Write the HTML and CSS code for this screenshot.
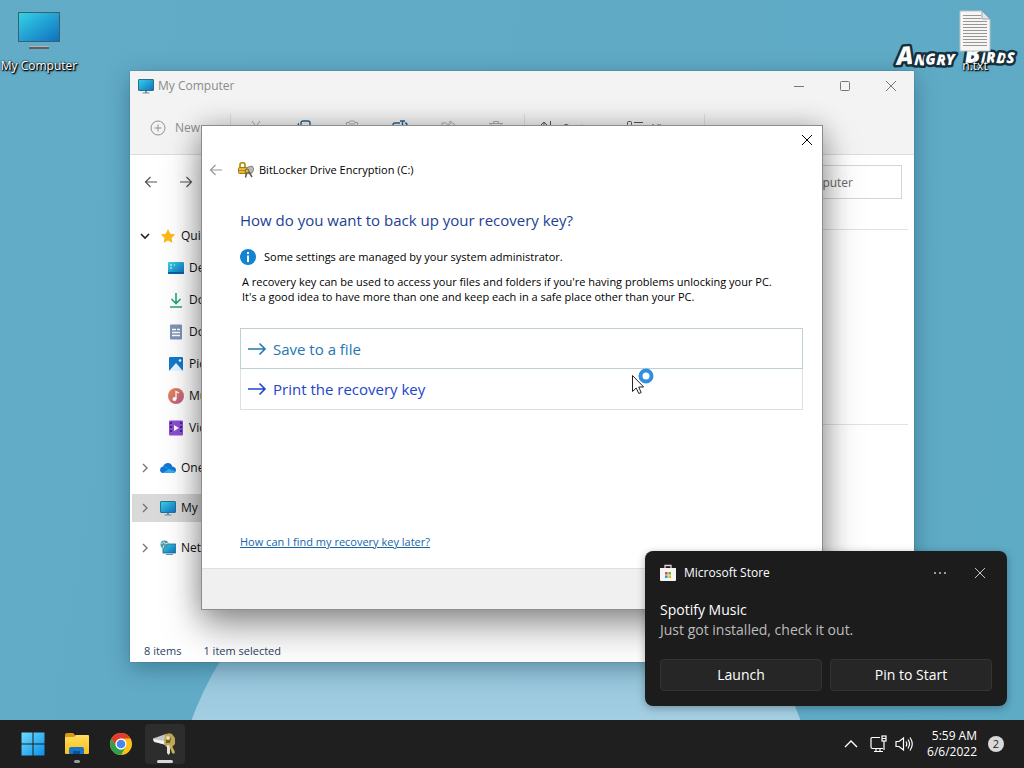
FILE: index.html
```html
<!DOCTYPE html>
<html lang="en">
<head>
    <meta charset="UTF-8">
    <title>Desktop</title>
    <link rel="stylesheet" href="styles.css">
</head>
<body>

<svg class="defs" aria-hidden="true">
    <defs>
        <linearGradient id="screen" x1="0" y1="0" x2="1" y2="1">
            <stop offset="0" stop-color="#35d3e6"/>
            <stop offset="1" stop-color="#0f6fc0"/>
        </linearGradient>
        <linearGradient id="win" x1="0" y1="0" x2="1" y2="1">
            <stop offset="0" stop-color="#6fdcff"/>
            <stop offset="1" stop-color="#0a8fe8"/>
        </linearGradient>
        <linearGradient id="warm" x1="0" y1="0" x2="1" y2="1">
            <stop offset="0" stop-color="#ee8a4c"/>
            <stop offset="1" stop-color="#b75a93"/>
        </linearGradient>
        <linearGradient id="folder" x1="0" y1="0" x2="0" y2="1">
            <stop offset="0" stop-color="#ffdd5c"/>
            <stop offset="1" stop-color="#fbbf1e"/>
        </linearGradient>
    </defs>
    <symbol id="i-pc" viewBox="0 0 16 16">
        <rect x="0.5" y="1.5" width="15" height="11" rx="0.5" fill="url(#screen)" stroke="#2c6f8c"/>
        <path d="M7 13h2v2H7zM4.500 14.500h7v1h-7z" fill="#5a96ae"/>
    </symbol>
    <symbol id="i-x" viewBox="0 0 12 12">
        <path d="M1 1l10 10M11 1L1 11" fill="none" stroke="currentColor"/>
    </symbol>
    <symbol id="i-left" viewBox="0 0 14 14">
        <path d="M13 7H1.500M6.500 2l-5 5 5 5" fill="none" stroke="currentColor" stroke-width="1.200"/>
    </symbol>
    <symbol id="i-right" viewBox="0 0 14 14">
        <path d="M1 7h11.500M7.500 2l5 5-5 5" fill="none" stroke="currentColor" stroke-width="1.200"/>
    </symbol>
    <symbol id="i-go" viewBox="0 0 20 14">
        <path d="M0 7h17M11.500 1.500L17 7l-5.500 5.500" fill="none" stroke="currentColor" stroke-width="1.600"/>
    </symbol>
    <symbol id="i-chev" viewBox="0 0 10 10">
        <path d="M3 1l4 4-4 4" fill="none" stroke="currentColor" stroke-width="1.400"/>
    </symbol>
    <symbol id="i-down" viewBox="0 0 10 10">
        <path d="M1 3l4 4 4-4" fill="none" stroke="currentColor" stroke-width="1.600"/>
    </symbol>
    <symbol id="i-key" viewBox="0 0 16 16">
        <path d="M7 6l7-2 2 3-2 4-6 1z" fill="#b9bcb4" stroke="#6c6c60" stroke-width="0.800"/>
        <path d="M2 6V3a2.500 2.500 0 0 1 5 0v3" fill="none" stroke="#b98f22" stroke-width="1.800"/>
        <rect x="0.500" y="5.500" width="8" height="6" rx="1" fill="#e8b92c" stroke="#a07a18"/>
        <path d="M1 8.500h7" stroke="#a87f18" stroke-width="0.700"/>
        <circle cx="9" cy="9" r="2" fill="#d6b75a" stroke="#6e6030"/>
        <path d="M8.500 11l-1 4.500M11 10l3 5" stroke="#5c5746" stroke-width="1.500"/>
    </symbol>
</svg>

<main class="desktop">
    <div class="petal"></div>

    <a class="shortcut shortcut-pc" href="#">
        <svg viewBox="0 0 42 42" width="42" height="42" aria-hidden="true">
            <rect x="0.500" y="2.500" width="41" height="29" fill="url(#screen)" stroke="#3a5f70"/>
            <rect x="11" y="37" width="20" height="2" fill="#6a5a58"/>
            <rect x="11" y="36" width="20" height="1" fill="#a9b9be"/>
        </svg>
        <span>My Computer</span>
    </a>

    <svg class="logo" viewBox="0 0 132 40" width="132" height="40" role="img" aria-label="Angry Birds">
        <text x="5" y="33" rotate="-4 3 -5 2 -2"><tspan class="cap">A</tspan>NGRY</text>
        <text x="73" y="31" rotate="-3 2 -3 4 2"><tspan class="cap">B</tspan>IRDS</text>
    </svg>

    <a class="shortcut shortcut-txt" href="#">
        <svg viewBox="0 0 32 42" width="32" height="42" aria-hidden="true">
            <path d="M1 1h22l8 8v32H1z" fill="#f6f6f4" stroke="#b9c2c4"/>
            <path d="M4 5.500h18M4 8.500h18M4 11.500h24M4 14.500h24M4 17.500h24M4 20.500h24M4 23.500h24M4 26.500h24M4 29.500h24M4 32.500h24M4 35.500h24" stroke="#9a9492"/>
            <path d="M23 1v8h8z" fill="#dfe5e8" stroke="#98a4a8"/>
        </svg>
        <span>n.txt</span>
    </a>

    <section class="explorer">
        <header class="explorer-title">
            <svg width="16" height="16" aria-hidden="true"><use href="#i-pc"/></svg>
            <span>My Computer</span>
            <div class="caption">
                <button aria-label="Minimize"><svg width="12" height="12" viewBox="0 0 12 12"><path d="M1 6.500h10" stroke="currentColor"/></svg></button>
                <button aria-label="Maximize"><svg width="12" height="12" viewBox="0 0 12 12"><rect x="1.500" y="1.500" width="9" height="9" rx="1" fill="none" stroke="currentColor"/></svg></button>
                <button aria-label="Close"><svg width="12" height="12"><use href="#i-x"/></svg></button>
            </div>
        </header>

        <div class="toolbar">
            <button class="new">
                <svg width="16" height="16" viewBox="0 0 16 16" aria-hidden="true"><circle cx="8" cy="8" r="7" fill="none" stroke="currentColor"/><path d="M8 4.500v7M4.500 8h7" stroke="currentColor"/></svg>
                New
            </button>
            <div class="tools">
                <button aria-label="Cut"><svg width="16" height="16" viewBox="0 0 16 16" fill="none" stroke="currentColor"><path d="M4 1l7 10M12 1L5 11"/><circle cx="4" cy="13" r="2"/><circle cx="12" cy="13" r="2"/></svg></button>
                <button class="on" aria-label="Copy"><svg width="16" height="16" viewBox="0 0 16 16" fill="none" stroke="currentColor" stroke-width="1.400"><rect x="5" y="1" width="9" height="11" rx="2"/><path d="M3 3.500Q2 4 2 6v6q0 3 3 3h5"/></svg></button>
                <button aria-label="Paste"><svg width="16" height="16" viewBox="0 0 16 16" fill="none" stroke="currentColor"><path d="M5 2.500H2.500v12H7M11 2.500h2.500V6"/><rect x="5" y="1" width="6" height="3" rx="1.500"/><rect x="8" y="7" width="6" height="8" rx="1"/></svg></button>
                <button class="on" aria-label="Rename"><svg width="16" height="16" viewBox="0 0 16 16" fill="none" stroke="currentColor" stroke-width="1.400"><path d="M8 3H3Q1 3 1 5v6q0 2 2 2h5M13 3q2 0 2 2v6q0 2-2 2M8 1h5M10.500 1v14M8 15h5"/></svg></button>
                <button aria-label="Share"><svg width="16" height="16" viewBox="0 0 16 16" fill="none" stroke="currentColor"><path d="M7 3H2v11h11v-3M10 1l5 4-5 4V7Q6 7 5 10q0-6 5-6z"/></svg></button>
                <button aria-label="Delete"><svg width="16" height="16" viewBox="0 0 16 16" fill="none" stroke="currentColor"><path d="M1 3.500h14M5.500 3V1.500h5V3M3 4l1 11h8l1-11M6.500 7v5M9.500 7v5"/></svg></button>
            </div>
            <button class="menu">
                <svg width="16" height="16" viewBox="0 0 16 16" fill="none" stroke="currentColor" aria-hidden="true"><path d="M5 15V2M1 6l4-4 4 4M11.500 1v13M8 11l3.500 3.500L15 11"/></svg>
                Sort
            </button>
            <button class="menu">
                <svg width="18" height="16" viewBox="0 0 18 16" fill="none" stroke="currentColor" aria-hidden="true"><rect x="1.500" y="1.500" width="4" height="4" rx="1"/><path d="M8 2.500h9M8 5.500h9M8 10.500h9M8 13.500h9"/><rect x="1.500" y="9.500" width="4" height="4" rx="1"/></svg>
                View
            </button>
        </div>

        <div class="address">
            <button aria-label="Back"><svg width="14" height="14"><use href="#i-left"/></svg></button>
            <button aria-label="Forward"><svg width="14" height="14"><use href="#i-right"/></svg></button>
            <input type="text" class="search" aria-label="Search" placeholder="Search My Computer">
        </div>

        <div class="explorer-body">
            <nav class="tree">
                <a href="#" class="open">
                    <svg class="chev" width="10" height="10"><use href="#i-down"/></svg>
                    <svg width="16" height="16" viewBox="0 0 16 16"><path d="M8 1l2.200 4.700 5 .7-3.700 3.500.9 5.100L8 12.500 3.600 15l.9-5.100L.8 6.400l5-.7z" fill="#fbb914"/></svg>
                    Quick access
                </a>
                <a href="#" class="sub">
                    <svg width="16" height="16" viewBox="0 0 16 16"><rect y="2" width="16" height="12" rx="1" fill="url(#screen)"/><path d="M2 5h2M2 8h2M6 5h1" stroke="#fff"/><path d="M0 12h16v1q0 1-1 1H1q-1 0-1-1z" fill="#0b5ea8"/></svg>
                    Desktop
                </a>
                <a href="#" class="sub">
                    <svg width="16" height="16" viewBox="0 0 16 16"><path d="M8 1v10M3.500 7L8 11.500 12.500 7M2 15h12" fill="none" stroke="#27a57c" stroke-width="1.600"/></svg>
                    Downloads
                </a>
                <a href="#" class="sub">
                    <svg width="16" height="16" viewBox="0 0 16 16"><rect x="2" y="0.500" width="12" height="15" rx="1" fill="#7f93b8"/><path d="M4 5.500h4M9 5.500h3M4 8.500h8M4 11.500h8" stroke="#fff" stroke-width="1.400"/></svg>
                    Documents
                </a>
                <a href="#" class="sub">
                    <svg width="16" height="16" viewBox="0 0 16 16"><rect x="1" y="1" width="14" height="14" rx="1" fill="#1379cc"/><path d="M1 15l7-8 7 8z" fill="#e9f6ff"/><circle cx="12" cy="4.500" r="1.300" fill="#fff"/></svg>
                    Pictures
                </a>
                <a href="#" class="sub">
                    <svg width="16" height="16" viewBox="0 0 16 16"><circle cx="8" cy="8" r="8" fill="url(#warm)"/><path d="M8 11V3.500l3 1.500" fill="none" stroke="#fff" stroke-width="1.300"/><circle cx="6.500" cy="11" r="2" fill="#fff"/></svg>
                    Music
                </a>
                <a href="#" class="sub">
                    <svg width="16" height="16" viewBox="0 0 16 16"><rect x="1" y="0.500" width="14" height="15" rx="1" fill="#8a4fd3"/><path d="M3 2v12M13 2v12" stroke="#3f1d82" stroke-width="1.800" stroke-dasharray="2 2"/><path d="M6 5l5 3-5 3z" fill="#fff"/></svg>
                    Videos
                </a>
                <a href="#" class="root">
                    <svg class="chev" width="10" height="10"><use href="#i-chev"/></svg>
                    <svg width="16" height="16" viewBox="0 0 16 16"><path d="M3 13q-3-.3-3-3.300Q.2 7 3 6.500 4.500 3 8 3q3.500.2 4.300 3.500Q16 7 16 10q-.2 3-3 3z" fill="#0f78d4"/><path d="M3 6.500Q5.500 6 9 8.700l6.500 2.800Q14.700 13 13 13H3l6-4.300z" fill="#35a9f0"/></svg>
                    OneDrive
                </a>
                <a href="#" class="root selected">
                    <svg class="chev" width="10" height="10"><use href="#i-chev"/></svg>
                    <svg width="16" height="16"><use href="#i-pc"/></svg>
                    My Computer
                </a>
                <a href="#" class="root">
                    <svg class="chev" width="10" height="10"><use href="#i-chev"/></svg>
                    <svg width="16" height="16" viewBox="0 0 16 16"><rect x="3" y="4" width="12.500" height="9" fill="url(#screen)" stroke="#1d6c94" stroke-width="0.800"/><path d="M6 14.500h7" stroke="#5a96ae"/><circle cx="4.500" cy="4.500" r="4" fill="#4a98aa"/><path d="M1 4l3-2 1 2 3-1M3 8l1-3" stroke="#c4e6ea" fill="none"/></svg>
                    Network
                </a>
            </nav>
            <div class="files">
                <section class="group"></section>
                <section class="group"></section>
            </div>
        </div>

        <footer class="status">
            <span>8 items</span>
            <span>1 item selected</span>
        </footer>
    </section>

    <section class="dialog" role="dialog" aria-labelledby="dialogTitle">
        <div class="dialog-top">
            <button aria-label="Close"><svg width="12" height="12"><use href="#i-x"/></svg></button>
        </div>
        <header class="dialog-nav">
            <button aria-label="Back"><svg width="14" height="14"><use href="#i-left"/></svg></button>
            <svg width="16" height="16" aria-hidden="true"><use href="#i-key"/></svg>
            <span id="dialogTitle">BitLocker Drive Encryption (C:)</span>
        </header>
        <div class="dialog-body">
            <h1>How do you want to back up your recovery key?</h1>
            <p class="info">
                <svg width="16" height="16" viewBox="0 0 16 16" aria-hidden="true"><circle cx="8" cy="8" r="8" fill="#1583cf"/><path d="M8 3v2M8 6.500V13" stroke="#fff" stroke-width="2"/></svg>
                Some settings are managed by your system administrator.
            </p>
            <p class="text">A recovery key can be used to access your files and folders if you're having problems unlocking your PC.<br>It's a good idea to have more than one and keep each in a safe place other than your PC.</p>
            <button class="option hot"><svg width="20" height="14" aria-hidden="true"><use href="#i-go"/></svg>Save to a file</button>
            <button class="option"><svg width="20" height="14" aria-hidden="true"><use href="#i-go"/></svg>Print the recovery key</button>
            <a class="help" href="#">How can I find my recovery key later?</a>
        </div>
        <footer class="dialog-foot"></footer>
    </section>

    <svg class="pointer" width="24" height="28" viewBox="0 0 24 28" aria-hidden="true">
        <circle cx="15" cy="9" r="5.500" fill="#fff" stroke="#2f8fe0" stroke-width="4"/>
        <path d="M1.500 8.500v16l3.700-3.500 2.600 5.500 2.400-1-2.500-5.500h5z" fill="#fff" stroke="#222"/>
    </svg>

    <aside class="toast">
        <header>
            <svg width="16" height="18" viewBox="0 0 16 18" aria-hidden="true">
                <path d="M5 5V1.500h6V5" fill="none" stroke="#f1c9cf" stroke-width="1.300"/>
                <path d="M0 4h16v12q0 1-1 1H1q-1 0-1-1z" fill="#f4f4f4"/>
                <path d="M5 8h2.600v2.600H5z" fill="#e0502c"/><path d="M8.400 8H11v2.600H8.400z" fill="#74b41c"/>
                <path d="M5 11.400h2.600V14H5z" fill="#1f9ee4"/><path d="M8.400 11.400H11V14H8.400z" fill="#f2b30b"/>
            </svg>
            <span>Microsoft Store</span>
            <button aria-label="More"><svg width="12" height="12" viewBox="0 0 12 12" fill="currentColor"><circle cx="1" cy="6" r="1"/><circle cx="6" cy="6" r="1"/><circle cx="11" cy="6" r="1"/></svg></button>
            <button aria-label="Dismiss"><svg width="12" height="12"><use href="#i-x"/></svg></button>
        </header>
        <h2>Spotify Music</h2>
        <p>Just got installed, check it out.</p>
        <div class="actions">
            <button>Launch</button>
            <button>Pin to Start</button>
        </div>
    </aside>
</main>

<footer class="taskbar">
    <button class="app" aria-label="Start">
        <svg width="24" height="24" viewBox="0 0 24 24"><path d="M.5.500h11v11H.5zM12.500.500h11v11h-11zM.5 12.500h11v11H.5zM12.500 12.500h11v11h-11z" fill="url(#win)"/></svg>
    </button>
    <button class="app running" aria-label="File Explorer">
        <svg width="24" height="24" viewBox="0 0 24 24"><path d="M0 5V3q0-2 2-2h6l3 3v5H0z" fill="#d99a12"/><path d="M0 6q0-1 1-1h8l2-2h12q1 0 1 1v17q0 1-1 1H1q-1 0-1-1z" fill="url(#folder)"/><path d="M4 22v-5q0-2 2-2h11q2 0 2 2v5z" fill="#1777c4"/><path d="M8 22v-3h7v3z" fill="#0d4f94"/></svg>
    </button>
    <button class="app" aria-label="Chrome">
        <svg width="24" height="24" viewBox="0 0 24 24"><circle cx="12" cy="12" r="11" fill="#fbc116"/><path d="M2.500 6.500A11 11 0 0 1 21.500 6.500H12A5.500 5.500 0 0 0 7.200 14.700z" fill="#e33b2e"/><path d="M2.500 6.500A11 11 0 0 0 12 23l4.800-8.200A5.500 5.500 0 0 1 7.200 14.700z" fill="#2da04e"/><circle cx="12" cy="12" r="5.500" fill="#fff"/><circle cx="12" cy="12" r="4.300" fill="#4a86ea"/></svg>
    </button>
    <button class="app active" aria-label="BitLocker Drive Encryption">
        <svg width="24" height="24" viewBox="0 0 24 24"><path d="M0 6.500L13 2l6 1 3 6-8 4-13-3z" fill="#c3c6c8"/><path d="M0 7l14 2.500-1 3.500L1 9.500z" fill="#f1f2f2"/><path d="M12 3q3-3 7-1l3 4v6l-3 3h-6l-2-4z" fill="#bda552"/><path d="M13 5q3-2 5 1l-1 5h-4z" fill="#6f6030"/><circle cx="15" cy="6" r="2" fill="#f0dfa0"/><path d="M14 13h3v8l-1.500 2-1.500-2z" fill="#e1e1de"/><path d="M18 12l4 8-1 2-2-1-3-8z" fill="#c9ad4b"/></svg>
    </button>
    <div class="tray">
        <button aria-label="Hidden icons"><svg width="14" height="14" viewBox="0 0 14 14"><path d="M1 10l6-6 6 6" fill="none" stroke="currentColor" stroke-width="1.400"/></svg></button>
        <button aria-label="Network"><svg width="18" height="18" viewBox="0 0 18 18" fill="none" stroke="currentColor" stroke-width="1.200"><path d="M10 2.500H2Q1 2.500 1 4v8q0 1.500 1.500 1.500H13M6 14v2.500M10 14v2.500M4 16.500h9"/><rect x="12" y="1" width="4" height="5"/><path d="M12 3.500h4M14 6v9"/></svg></button>
        <button aria-label="Volume"><svg width="18" height="18" viewBox="0 0 18 18" fill="none" stroke="currentColor" stroke-width="1.200"><path d="M1 6.500h3L8.500 3v12L4 11.500H1zM11 6.500q1.500 2.500 0 5M13 4.500q3 4.500 0 9M15 2.500q4.500 6.500 0 13"/></svg></button>
        <time class="clock">5:59 AM<br>6/6/2022</time>
        <span class="badge">2</span>
    </div>
</footer>

</body>
</html>
```
FILE: styles.css
```css
* {
    box-sizing: border-box;
}
body {
    display: flex;
    flex-direction: column;
    height: 100vh;
    margin: 0;
    overflow: hidden;
    font: 12px/16px "Open Sans", "Noto Sans", sans-serif;
    color: #111;
}
button {
    display: flex;
    align-items: center;
    justify-content: center;
    padding: 0;
    border: none;
    background: none;
    color: inherit;
    font: inherit;
}
a {
    color: inherit;
    text-decoration: none;
}
svg {
    flex: none;
}
h1, h2, p {
    margin: 0;
    font-weight: 400;
}
.defs {
    position: absolute;
    width: 0;
    height: 0;
}

/* desktop */
.desktop {
    position: relative;
    flex: 1;
    overflow: hidden;
    background: linear-gradient(100deg, #62acc8 0%, #60aac6 60%, #5eabc6 100%);
}
.petal {
    position: absolute;
    left: 172px;
    top: 507px;
    width: 648px;
    height: 648px;
    border-radius: 50%;
    background: linear-gradient(#8bbfd6 20%, #a6d0e4 34%);
}
.shortcut {
    position: absolute;
    display: flex;
    flex-direction: column;
    align-items: center;
    gap: 6px;
    width: 78px;
    color: #fff;
    text-shadow: 1px 1px 2px #000, 0 0 2px #000, 1px 1px 1px #000;
}
.shortcut-pc {
    left: 0;
    top: 10px;
}
.shortcut-txt {
    right: 10px;
    top: 10px;
}
.logo {
    position: absolute;
    right: 0;
    top: 32px;
    fill: #fff;
    stroke: #16303c;
    stroke-width: 5px;
    stroke-linejoin: round;
    paint-order: stroke;
    font: italic 800 15px "Open Sans", sans-serif;
}
.logo .cap {
    font-size: 25px;
}

/* file explorer */
.explorer {
    position: absolute;
    left: 130px;
    top: 71px;
    display: flex;
    flex-direction: column;
    width: 784px;
    height: 591px;
    background: #fff;
    box-shadow: 0 0 1px #30606f, 0 6px 22px rgba(0, 40, 60, 0.35);
}
.explorer-title {
    display: flex;
    align-items: center;
    gap: 4px;
    height: 29px;
    padding-left: 8px;
    background: #f3f3f3;
    color: #8b8b8b;
}
.caption {
    display: flex;
    margin-left: auto;
    color: #777;
}
.caption button {
    width: 46px;
    height: 29px;
}
.toolbar {
    display: flex;
    align-items: center;
    height: 55px;
    padding: 2px 0 0 20px;
    border-bottom: 1px solid #dcdcdc;
    background: #f3f3f3;
    color: #8f8f8f;
}
.toolbar .new {
    gap: 9px;
    padding-right: 30px;
}
.tools {
    display: flex;
    gap: 32px;
    padding: 6px 20px 6px 17px;
    border-left: 1px solid #dedede;
    border-right: 1px solid #dedede;
    color: #aaa;
}
.tools .on {
    color: #24628f;
}
.menu {
    gap: 8px;
    padding: 0 28px 0 14px;
    color: #555;
    font-size: 11px;
}
.menu:last-child {
    padding: 6px 28px 6px 14px;
    border-right: 1px solid #dedede;
}
.address {
    display: flex;
    align-items: center;
    gap: 21px;
    height: 54px;
    padding: 0 12px 0 14px;
    color: #555;
}
.search {
    width: 210px;
    height: 34px;
    margin-left: auto;
    padding: 0 48px 0 0;
    border: 1px solid #d5d5d5;
    background: #fff;
    font: inherit;
    text-align: right;
}
.search::placeholder {
    color: #6a6a6a;
    opacity: 1;
}
.explorer-body {
    display: flex;
    flex: 1;
}
.tree {
    display: flex;
    flex-direction: column;
    gap: 4px;
    width: 190px;
    padding: 13px 0 0 2px;
}
.tree a {
    display: flex;
    align-items: center;
    gap: 5px;
    height: 28px;
    padding-left: 8px;
}
.tree .chev {
    margin-right: 5px;
    color: #777;
}
.tree .open .chev {
    color: #222;
}
.tree .sub {
    padding-left: 36px;
}
.tree .root {
    margin-top: 8px;
}
.tree .selected {
    background: #d9d9d9;
}
.files {
    flex: 1;
    padding: 20px 6px 0 0;
}
.group {
    height: 195px;
    border-top: 1px solid #e2e2e2;
}
.status {
    display: flex;
    align-items: center;
    gap: 22px;
    height: 22px;
    padding-left: 14px;
    color: #2b3f63;
    font-size: 11px;
}

/* BitLocker wizard */
.dialog {
    position: absolute;
    left: 201px;
    top: 125px;
    display: flex;
    flex-direction: column;
    width: 622px;
    height: 485px;
    border: 1px solid #8c8c8c;
    background: #fff;
    box-shadow: 0 18px 36px rgba(0, 0, 0, 0.35), 0 2px 24px rgba(0, 0, 0, 0.25);
    color: #000;
    font-size: 11px;
}
.dialog-top {
    display: flex;
    justify-content: flex-end;
    height: 28px;
}
.dialog-top button {
    width: 30px;
}
.dialog-nav {
    display: flex;
    align-items: center;
    gap: 5px;
    height: 32px;
    padding-left: 7px;
}
.dialog-nav button {
    margin-right: 10px;
    color: #999;
}
.dialog-body {
    display: flex;
    flex: 1;
    flex-direction: column;
    align-items: stretch;
    padding: 22px 19px 18px 38px;
}
.dialog h1 {
    color: #1c3f94;
    font-size: 15px;
    line-height: 24px;
}
.info {
    display: flex;
    align-items: center;
    gap: 8px;
    margin-top: 17px;
}
.text {
    margin: 9px 0 24px 2px;
    line-height: 15px;
}
.option {
    justify-content: flex-start;
    gap: 5px;
    height: 41px;
    padding-left: 7px;
    border: 1px solid #dbe0e2;
    border-top: none;
    color: #2146c8;
    font-size: 15px;
}
.option.hot {
    border: 1px solid #bfd0d5;
    color: #2277b5;
}
.help {
    align-self: flex-start;
    margin-top: auto;
    color: #1666aa;
    text-decoration: underline;
}
.dialog-foot {
    height: 41px;
    border-top: 1px solid #dfdfdf;
    background: #f0f0f0;
}
.pointer {
    position: absolute;
    left: 631px;
    top: 367px;
}

/* notification */
.toast {
    position: absolute;
    right: 17px;
    bottom: 14px;
    width: 362px;
    padding: 7px 15px 15px;
    border-radius: 8px;
    background: #1c1c1c;
    box-shadow: 0 2px 8px rgba(0, 0, 0, 0.3);
    color: #fff;
    font-size: 14px;
    line-height: 20px;
}
.toast header {
    display: flex;
    align-items: center;
    gap: 8px;
    height: 30px;
    margin-bottom: 12px;
    font-size: 12px;
}
.toast header span {
    flex: 1;
}
.toast header button {
    width: 24px;
    height: 24px;
    margin-left: 8px;
    color: #c4c4c4;
}
.toast h2 {
    font-size: 14px;
}
.toast p {
    color: #bdbdbd;
}
.actions {
    display: flex;
    gap: 8px;
    margin-top: 19px;
}
.actions button {
    flex: 1;
    height: 32px;
    border: 1px solid #333;
    border-radius: 4px;
    background: #262626;
}

/* taskbar */
.taskbar {
    display: flex;
    align-items: center;
    gap: 4px;
    height: 48px;
    padding: 0 20px 0 13px;
    background: #1f1f1f;
    color: #fff;
}
.app {
    position: relative;
    width: 40px;
    height: 40px;
    border-radius: 4px;
}
.app.active {
    background: #2d2d2d;
}
.app.running::after, .app.active::after {
    content: "";
    position: absolute;
    bottom: 1px;
    width: 6px;
    height: 3px;
    border-radius: 2px;
    background: #9a9a9a;
}
.app.active::after {
    width: 16px;
    background: #d8d8d8;
}
.tray {
    display: flex;
    align-items: center;
    gap: 7px;
    margin-left: auto;
}
.tray button:first-child {
    margin-right: 5px;
}
.clock {
    margin-left: 7px;
    text-align: right;
}
.badge {
    width: 16px;
    height: 16px;
    margin-left: 4px;
    border-radius: 50%;
    background: #d9d9d9;
    color: #222;
    font-size: 11px;
    text-align: center;
}
```
